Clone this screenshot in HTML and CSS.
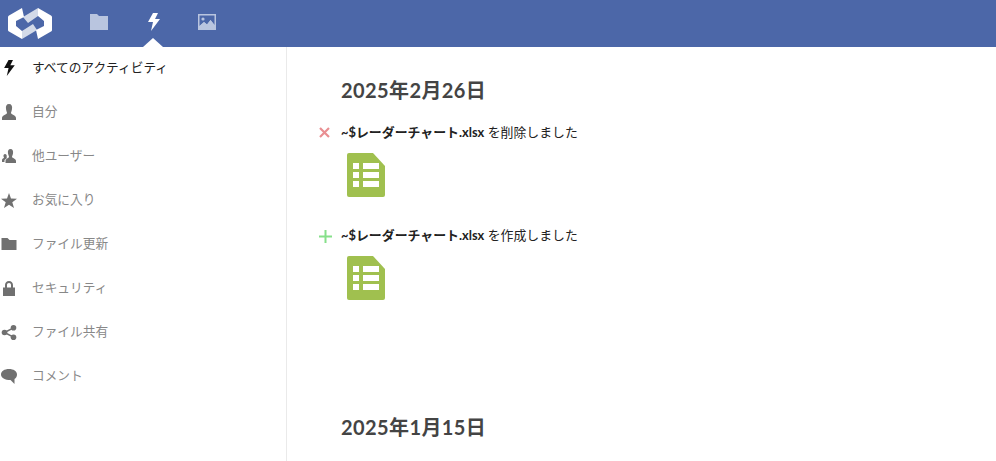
FILE: index.html
```html
<!DOCTYPE html>
<html lang="ja">
<head>
<meta charset="UTF-8">
<title>アクティビティ</title>
<link rel="stylesheet" href="styles.css">
</head>
<body>
	<header class="topbar">
		<svg class="logo" width="44" height="31" viewBox="0 0 44 31">
			<path fill="#d3dae8" d="M15 9 L30 0 V8 L20 15 Z M14 31 V23 L25 16 L29 22 Z"/>
			<path fill="#fff" d="M14 0 L16 9 L8 13 V18 L14 23 V31 L1 23.500 Q0 23 0 22 V9 Q0 8 1 7.500 Z"/>
			<path fill="#fff" d="M30 0 L43 7.500 Q44 8 44 9 V22 Q44 23 43 23.500 L30 31 L28 22 L36 18 V13 L30 8 Z"/>
		</svg>
		<nav class="apps">
			<a class="app">
				<svg width="18" height="16" viewBox="0 0 18 16"><path fill="#b9c5df" d="M0 0 H7 L9 2 H18 V16 H0 Z"/></svg>
			</a>
			<a class="app app-active">
				<svg width="13" height="18" viewBox="0 0 13 18"><path fill="#fff" d="M6 0 H11 L8 6 H13 L4 18 L6 9 H1 Z"/></svg>
			</a>
			<a class="app">
				<svg width="18" height="16" viewBox="0 0 18 16"><path fill="#b9c5df" fill-rule="evenodd" d="M0 0 H18 V16 H0 Z M1.500 1.500 V12 L6 8 L9 10.500 L12.500 6 L16.500 11 V1.500 Z"/><path fill="#b9c5df" d="M1.500 14.500 V12 L6 8 L9 10.500 L12.500 6 L16.500 11 V14.500 Z"/><circle cx="5" cy="5" r="1.600" fill="#b9c5df"/></svg>
			</a>
		</nav>
	</header>

	<div class="main">
		<aside class="sidebar">
			<ul>
				<li class="current">
					<svg width="14" height="16" viewBox="0 0 13 18"><path fill="#111" d="M6 0 H11 L8 6 H13 L4 18 L6 9 H1 Z"/></svg>
					<span>すべてのアクティビティ</span>
				</li>
				<li>
					<svg width="14" height="16" viewBox="0 0 14 16"><path d="M7 0 C9.500 0 10.500 2 10 5 C9.800 7 9 8 9 9 C9 10.500 14 11 14 14 V16 H0 V14 C0 11 5 10.500 5 9 C5 8 4.200 7 4 5 C3.500 2 4.500 0 7 0 Z"/></svg>
					<span>自分</span>
				</li>
				<li>
					<svg width="14" height="16" viewBox="0 0 14 16"><path d="M8.500 1 C10.500 1 11.500 3 11 5.500 C10.800 7 10 8 10 9 C10 10 14 10.500 14 13 V15 H3.500 V13 C3.500 10.500 7 10 7 9 C7 8 6.300 7 6 5.500 C5.500 3 6.500 1 8.500 1 Z M3 6 C4.200 6 5 7 4.700 8.500 C4.500 9.500 5 10 5 10 L2.500 12 V14 H0 V12 C0 10.500 2 10.500 2 9.500 C2 9 1.600 9 1.500 8.500 C1.200 7 2 6 3 6 Z"/></svg>
					<span>他ユーザー</span>
				</li>
				<li>
					<svg width="16" height="15" viewBox="0 0 16 15"><path d="M8 0 L10 5.400 L16 5.700 L11.300 9.300 L13 15 L8 11.800 L3 15 L4.700 9.300 L0 5.700 L6 5.400 Z"/></svg>
					<span>お気に入り</span>
				</li>
				<li>
					<svg width="15" height="12" viewBox="0 0 15 12"><path d="M0 0 H6 L8 2 H15 V12 H0 Z"/></svg>
					<span>ファイル更新</span>
				</li>
				<li>
					<svg width="14" height="15" viewBox="0 0 12 15"><path fill-rule="evenodd" d="M6 0 C8.500 0 10 1.700 10 4 V6.500 H12 V15 H0 V6.500 H2 V4 C2 1.700 3.500 0 6 0 Z M6 2 C4.700 2 4 2.800 4 4 V6.500 H8 V4 C8 2.800 7.300 2 6 2 Z"/></svg>
					<span>セキュリティ</span>
				</li>
				<li>
					<svg width="15" height="15" viewBox="0 0 15 15"><circle cx="3" cy="7.500" r="2.800"/><circle cx="12" cy="2.800" r="2.800"/><circle cx="12" cy="12.200" r="2.800"/><path stroke="#707070" stroke-width="1.500" d="M3 7.500 L12 2.800 M3 7.500 L12 12.200"/></svg>
					<span>ファイル共有</span>
				</li>
				<li>
					<svg width="16" height="15" viewBox="0 0 16 15"><path d="M8 0 C12.500 0 16 2.200 16 5.500 C16 7.500 15 9 13.500 10 L13.500 15 L9.500 11 C4 11 0 9 0 5.500 C0 2.200 3.500 0 8 0 Z"/></svg>
					<span>コメント</span>
				</li>
			</ul>
		</aside>

		<section class="content">
			<div class="day">
				<h2>2025年2月26日</h2>
				<div class="activity">
					<div class="line">
						<svg class="mark" width="11" height="11" viewBox="0 0 11 11"><path stroke="#e98f92" stroke-width="2.200" d="M1 1 L10 10 M10 1 L1 10"/></svg>
						<p><strong>~$レーダーチャート.xlsx</strong> を削除しました</p>
					</div>
					<svg class="sheet" width="38" height="44" viewBox="0 0 38 44">
						<path fill="#a0c04f" d="M2 0 H26 L38 13 V42 Q38 44 36 44 H2 Q0 44 0 42 V2 Q0 0 2 0 Z"/>
						<path fill="#fff" d="M6 10 H12 V16 H6 Z M16 10 H32 V16 H16 Z M6 19 H12 V25 H6 Z M16 19 H32 V25 H16 Z M6 28 H12 V34 H6 Z M16 28 H32 V34 H16 Z"/>
					</svg>
				</div>
				<div class="activity">
					<div class="line">
						<svg class="mark" width="13" height="13" viewBox="0 0 13 13"><path stroke="#86e08a" stroke-width="2" d="M6.500 0 V13 M0 6.500 H13"/></svg>
						<p><strong>~$レーダーチャート.xlsx</strong> を作成しました</p>
					</div>
					<svg class="sheet" width="38" height="44" viewBox="0 0 38 44">
						<path fill="#a0c04f" d="M2 0 H26 L38 13 V42 Q38 44 36 44 H2 Q0 44 0 42 V2 Q0 0 2 0 Z"/>
						<path fill="#fff" d="M6 10 H12 V16 H6 Z M16 10 H32 V16 H16 Z M6 19 H12 V25 H6 Z M16 19 H32 V25 H16 Z M6 28 H12 V34 H6 Z M16 28 H32 V34 H16 Z"/>
					</svg>
				</div>
			</div>
			<div class="day day-last">
				<h2>2025年1月15日</h2>
			</div>
		</section>
	</div>
</body>
</html>
```

FILE: styles.css
```css
* {
	margin: 0;
	padding: 0;
	box-sizing: border-box;
}
html, body {
	height: 100%;
	overflow: hidden;
}
body {
	background: #fff;
	color: #222;
	font-family: Lato, "Noto Sans CJK JP", sans-serif;
	font-size: 13px;
}
.topbar {
	height: 47px;
	background: #4c67a8;
	display: flex;
	align-items: center;
	padding-left: 8px;
}
.logo {
	display: block;
}
.apps {
	display: flex;
	height: 100%;
	margin-left: 20px;
}
.app {
	width: 54px;
	display: flex;
	align-items: center;
	justify-content: center;
	position: relative;
	padding-bottom: 4px;
}
.app-active::after {
	content: "";
	position: absolute;
	left: 50%;
	bottom: 0;
	margin-left: -10px;
	border: 10px solid transparent;
	border-top: 0;
	border-bottom: 9px solid #fff;
}
.main {
	display: flex;
	height: 414px;
}
.sidebar {
	width: 287px;
	border-right: 1px solid #eaeaea;
}
.sidebar ul {
	list-style: none;
}
.sidebar li {
	height: 44px;
	display: flex;
	align-items: center;
	color: #888;
	font-size: 12.7px;
}
.sidebar li svg {
	fill: #707070;
	flex: none;
	width: 16px;
	margin: 0 15px 2px 1px;
}
.sidebar li span {
	margin-bottom: 6px;
}
.sidebar li.current {
	color: #222;
}
.content {
	flex: 1;
	padding: 31px 0 0 54px;
}
.day {
	height: 337px;
}
.day-last {
	height: auto;
}
h2 {
	font-size: 20px;
	line-height: 24px;
	color: #444;
	font-weight: bold;
	letter-spacing: 0.4px;
}
.activity {
	margin-top: 21px;
	height: 83px;
}
.activity + .activity {
	margin-top: 20px;
}
.line {
	position: relative;
	height: 18px;
}
.line p {
	font-size: 12.9px;
	line-height: 18px;
}
.mark {
	position: absolute;
	left: -22px;
	top: 4px;
}
.sheet {
	display: block;
	margin: 12px 0 0 6px;
}
```
